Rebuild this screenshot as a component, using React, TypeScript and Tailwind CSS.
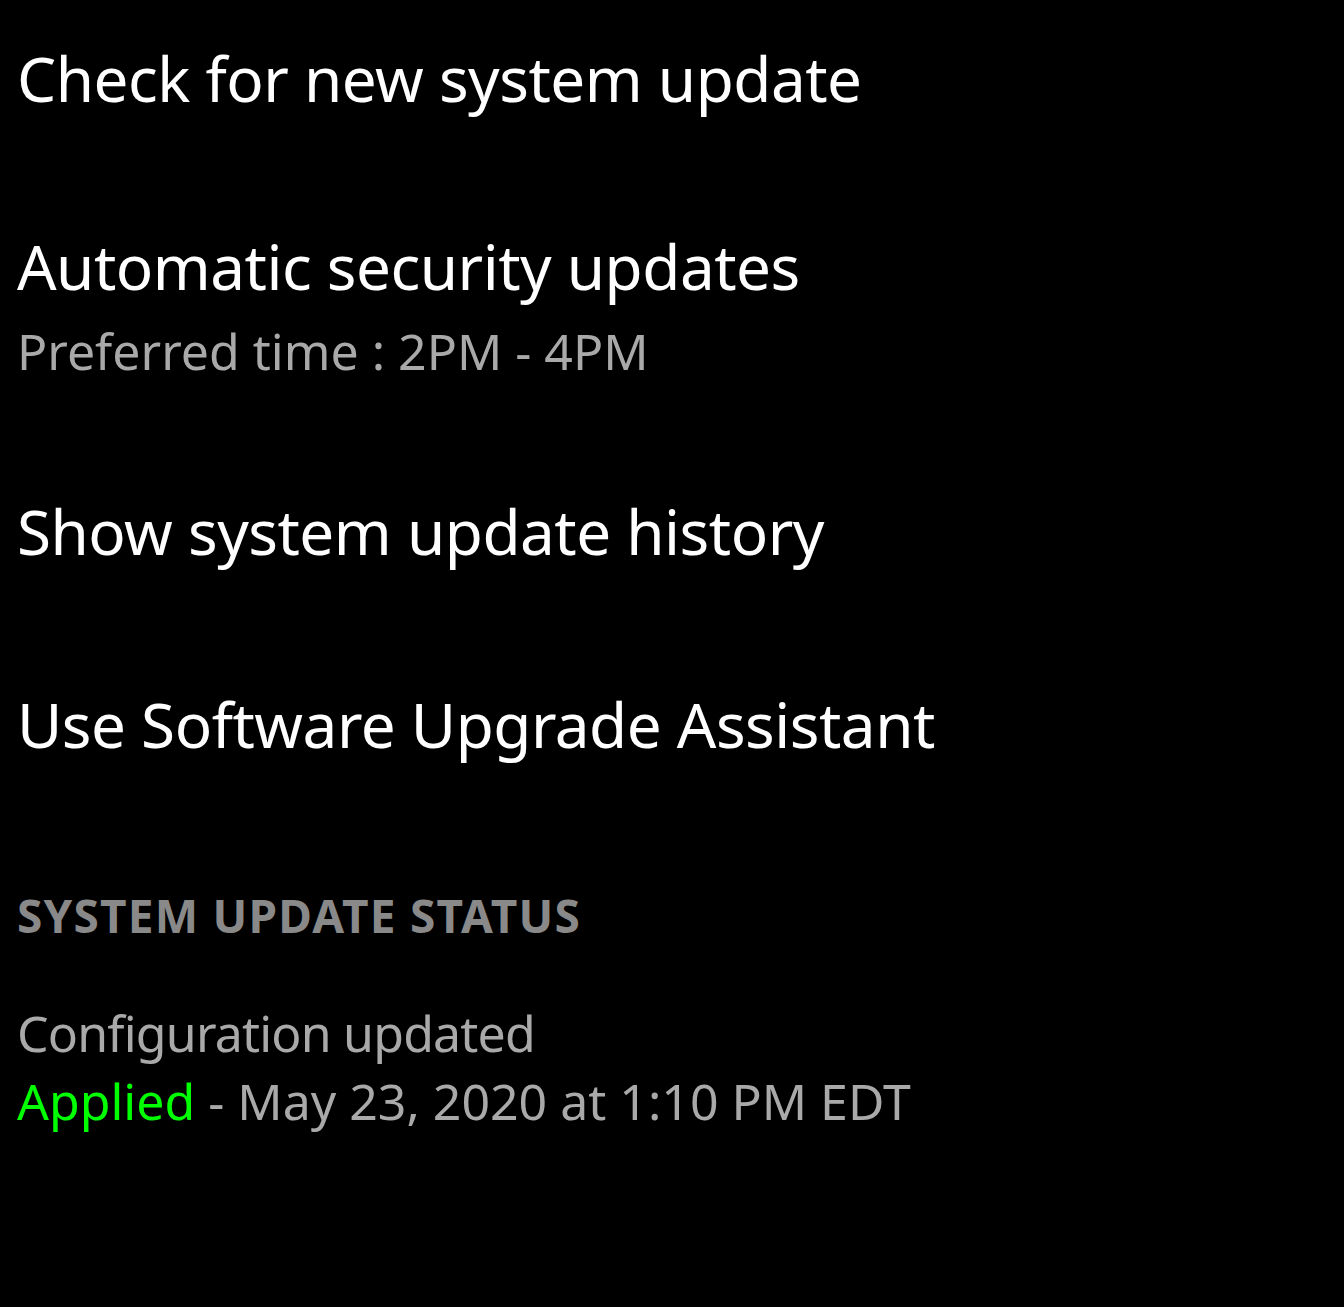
import React from 'react';

const font = { fontFamily: '"Noto Sans", "Open Sans", sans-serif' };

export default function App() {
  return (
    <div className="min-h-[1307px] w-[1344px] bg-black pl-[17px] text-white" style={font}>
      <div className="pt-[47px]">
        <p className="text-[62px] leading-none tracking-[-0.5px]">Check for new system update</p>
      </div>
      <div className="pt-[126px]">
        <p className="text-[62px] leading-none tracking-[-0.5px]">Automatic security updates</p>
        <p className="mt-[29px] text-[50px] leading-none tracking-[0px] text-[#a9a9a9]">Preferred time : 2PM - 4PM</p>
      </div>
      <div className="pt-[124px]">
        <p className="text-[62px] leading-none tracking-[-0.5px]">Show system update history</p>
      </div>
      <div className="pt-[131px]">
        <p className="text-[62px] leading-none tracking-[-0.5px]">Use Software Upgrade Assistant</p>
      </div>
      <div className="pt-[137px]">
        <p className="text-[46px] font-bold leading-none tracking-[1.2px] text-[#898989]">SYSTEM UPDATE STATUS</p>
      </div>
      <div className="pt-[70px] text-[50px] leading-none text-[#a9a9a9]">
        <p className="tracking-[-0.8px]">Configuration updated</p>
        <p className="mt-[18px] tracking-[0px]">
          <span className="text-[#00ff00]">Applied</span> - May 23, 2020 at 1:10 PM EDT
        </p>
      </div>
    </div>
  );
}
